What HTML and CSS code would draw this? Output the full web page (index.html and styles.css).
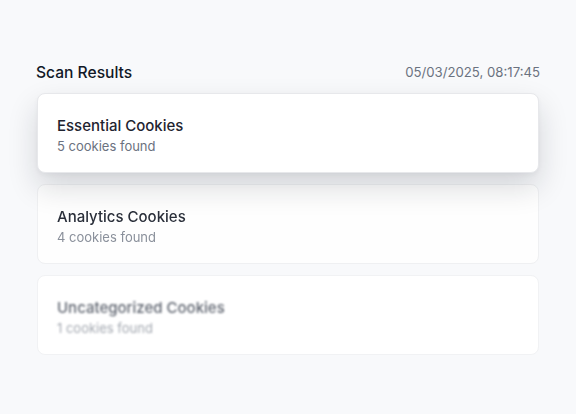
FILE: index.html
```html
<!DOCTYPE html>
<html lang="en">
<head>
<meta charset="utf-8">
<link rel="stylesheet" href="styles.css">
</head>
<body>
<main class="panel">
  <header class="head">
    <h2 class="head-title">Scan Results</h2>
    <span class="head-time">05/03/2025, 08:17:45</span>
  </header>
  <section class="list">
    <div class="card card-front">
      <div class="card-title">Essential Cookies</div>
      <div class="card-sub">5 cookies found</div>
    </div>
    <div class="card card-mid">
      <div class="card-title">Analytics Cookies</div>
      <div class="card-sub">4 cookies found</div>
    </div>
    <div class="card card-back">
      <div class="card-title">Uncategorized Cookies</div>
      <div class="card-sub">1 cookies found</div>
    </div>
  </section>
</main>
</body>
</html>
```

FILE: styles.css
```css
html, body {
  margin: 0;
  padding: 0;
  background: #f8f9fb;
  font-family: Inter, "Noto Sans", sans-serif;
}
.panel {
  width: 502px;
  margin: 0 auto;
  padding-top: 61px;
}
.head {
  display: flex;
  justify-content: space-between;
  align-items: center;
  height: 22px;
  margin-bottom: 10px;
}
.head-title {
  margin: 0 0 0 -1px;
  font-size: 15.6px;
  font-weight: 500;
  color: #111827;
}
.head-time {
  font-size: 13.2px;
  color: #6b7280;
  margin-right: -1px;
}
.list {
  display: flex;
  flex-direction: column;
  gap: 11px;
}
.card {
  position: relative;
  background: #fff;
  border: 1px solid #e7e8eb;
  border-radius: 8px;
  padding: 21px 19px 17px;
}
.card-title {
  font-size: 15px;
  line-height: 22px;
  font-weight: 500;
  color: #1f2430;
}
.card-sub {
  font-size: 13px;
  line-height: 18px;
  color: #6b7280;
}
.card-front {
  z-index: 2;
  box-shadow: 0 14px 30px rgba(17, 24, 39, 0.16), 0 2px 4px rgba(17, 24, 39, 0.04);
}
.card-mid {
  z-index: 1;
  border-color: #eff0f2;
  background: rgba(255, 255, 255, 0.8);
}
.card-mid .card-title,
.card-mid .card-sub {
  filter: blur(0.45px);
}
.card-mid .card-title {
  color: #2a2f3a;
}
.card-mid .card-sub {
  color: #8a909b;
}
.card-back {
  border-color: #f1f2f4;
  background: rgba(255, 255, 255, 0.9);
}
.card-back .card-title,
.card-back .card-sub {
  filter: blur(1.1px);
}
.card-back .card-title {
  color: #5f6570;
}
.card-back .card-sub {
  color: #a3a8b0;
}
```
